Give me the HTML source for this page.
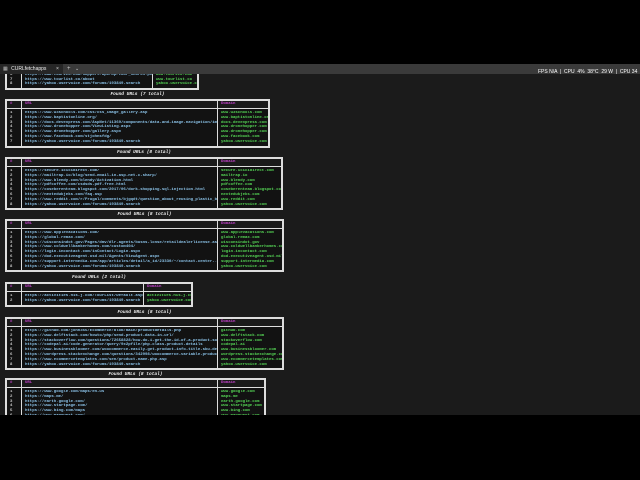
<!DOCTYPE html>
<html><head><meta charset="utf-8"><style>
html,body{margin:0;padding:0;background:#000;width:640px;height:480px;overflow:hidden;font-family:"Liberation Mono",monospace}
#term{position:absolute;left:0;top:64px;width:640px;height:351px;background:#1b1b1b;overflow:hidden}
#bar{position:absolute;left:0;top:64px;width:640px;height:10px;background:#3a3a3a;z-index:5}
#tab{position:absolute;left:0;top:0;width:63px;height:10px;background:#262626;color:#eee;font:5px "Liberation Sans",sans-serif;line-height:10px}
.t{position:absolute;left:5px;border:1px solid #ddd;background:#121212;box-sizing:border-box}
.t table{border-collapse:collapse;width:100%;table-layout:fixed;font-size:4px;font-weight:bold}
.t td{border:1.5px solid #ddd;padding:0 0 0 3px;vertical-align:top;line-height:4.8px}
.t td div{white-space:pre;overflow:hidden}
.hd td{height:7px;line-height:7px;color:#c040c8;background:#1a1a1a}
.bd td{padding-top:2px;padding-bottom:1px}
.n{color:#ccc}.u{color:#8cc4ea}.d{color:#55d655}
.ti{position:absolute;color:#eee;font-size:4.5px;font-weight:bold;font-style:italic;text-align:center;line-height:6px}
#ov{position:absolute;left:538px;top:69px;color:#fff;font:5px "Liberation Sans",sans-serif;z-index:6;white-space:pre}
</style></head><body>
<div id="term">
<div class="t" style="top:0px;width:194px"><table><col style="width:15px"><col style="width:131px"><col><tr class="bd"><td class="n"><div>5
6
7
8</div></td><td class="u"><div>https://www.tourmo.com/
https://www.tourzeo.com/support/api/mp/tour_search.php
https://www.tourlist.co/about
https://yahoo.uservoice.com/forums/193849-search</div></td><td class="d"><div>www.tourmo.com
www.tourzeo.com
www.tourlist.co
yahoo.uservoice.com</div></td></tr></table></div>
<div class="ti" style="left:5px;width:265px;top:28px">Found URLs (7 total)</div>
<div class="t" style="top:35px;width:265px"><table><col style="width:15px"><col style="width:196px"><col><tr class="hd"><td><div>#</div></td><td><div>URL</div></td><td><div>Domain</div></td></tr><tr class="bd"><td class="n"><div>1
2
3
4
5
6
7</div></td><td class="u"><div>https://www.w3schools.com/css/css_image_gallery.asp
https://www.baptistonline.org/
https://docs.devexpress.com/AspNet/11369/components/data-and-image-navigation/im...
https://www.dronehopper.com/ViewListing.aspx
https://www.dronehopper.com/gallery.aspx
https://www.facebook.com/stjohnsfdg/
https://yahoo.uservoice.com/forums/193849-search</div></td><td class="d"><div>www.w3schools.com
www.baptistonline.org
docs.devexpress.com
www.dronehopper.com
www.dronehopper.com
www.facebook.com
yahoo.uservoice.com</div></td></tr></table></div>
<div class="ti" style="left:5px;width:278px;top:86px">Found URLs (8 total)</div>
<div class="t" style="top:93px;width:278px"><table><col style="width:15px"><col style="width:196px"><col><tr class="hd"><td><div>#</div></td><td><div>URL</div></td><td><div>Domain</div></td></tr><tr class="bd"><td class="n"><div>1
2
3
4
5
6
7
8</div></td><td class="u"><div>https://secure.icicidirect.com/
https://mailtrap.io/blog/send-email-in-asp-net-c-sharp/
https://www.blendy.com/blendy/Activation.html
https://pdfcoffee.com/csdsds-pdf-free.html
https://coseberenteam.blogspot.com/2017/06/dork-shopping-sql-injection.html
https://nextedukjeks.com/faq.asp
https://www.reddit.com/r/Frugal/comments/bjgqdt/question_about_reusing_plastic_bo...
https://yahoo.uservoice.com/forums/193849-search</div></td><td class="d"><div>secure.icicidirect.com
mailtrap.io
www.blendy.com
pdfcoffee.com
coseberenteam.blogspot.com
nextedukjeks.com
www.reddit.com
yahoo.uservoice.com</div></td></tr></table></div>
<div class="ti" style="left:5px;width:279px;top:148px">Found URLs (8 total)</div>
<div class="t" style="top:155px;width:279px"><table><col style="width:15px"><col style="width:196px"><col><tr class="hd"><td><div>#</div></td><td><div>URL</div></td><td><div>Domain</div></td></tr><tr class="bd"><td class="n"><div>1
2
3
4
5
6
7
8</div></td><td class="u"><div>https://www.applevacations.com/
https://global.remax.com/
https://wisconsindot.gov/Pages/dmv/dlr-agents/busns-lcnse/retaildealerlicense.as...
https://www.coldwellbankerhomes.com/custom404/
https://login.incontact.com/inContact/Login.aspx
https://dod-executiveagent.osd.mil/Agents/ViewAgent.aspx
https://support.intermedia.com/app/articles/detail/a_id/23330/~/contact-center-...
https://yahoo.uservoice.com/forums/193849-search</div></td><td class="d"><div>www.applevacations.com
global.remax.com
wisconsindot.gov
www.coldwellbankerhomes.com
login.incontact.com
dod-executiveagent.osd.mil
support.intermedia.com
yahoo.uservoice.com</div></td></tr></table></div>
<div class="ti" style="left:5px;width:188px;top:211px">Found URLs (2 total)</div>
<div class="t" style="top:218px;width:188px"><table><col style="width:15px"><col style="width:122px"><col><tr class="hd"><td><div>#</div></td><td><div>URL</div></td><td><div>Domain</div></td></tr><tr class="bd"><td class="n"><div>1
2</div></td><td class="u"><div>https://activities.his-j.com/TourList/Default.aspx
https://yahoo.uservoice.com/forums/193849-search</div></td><td class="d"><div>activities.his-j.com
yahoo.uservoice.com</div></td></tr></table></div>
<div class="ti" style="left:5px;width:279px;top:246px">Found URLs (8 total)</div>
<div class="t" style="top:253px;width:279px"><table><col style="width:15px"><col style="width:196px"><col><tr class="hd"><td><div>#</div></td><td><div>URL</div></td><td><div>Domain</div></td></tr><tr class="bd"><td class="n"><div>1
2
3
4
5
6
7
8</div></td><td class="u"><div>https://github.com/john365/Ecommerce/blob/main/productdetails.php
https://www.delftstack.com/howto/php/send-product-data-in-url/
https://stackoverflow.com/questions/72658828/how-do-i-get-the-id-of-a-product-so...
https://codepal.ai/code-generator/query/9x2pf1le/php-class-product-details
https://www.businessbloomer.com/woocommerce-easily-get-product-info-title-sku-de...
https://wordpress.stackexchange.com/questions/342998/woocommerce-variable-produc...
https://www.ecommercetemplates.com/sen/product-name-php.asp
https://yahoo.uservoice.com/forums/193849-search</div></td><td class="d"><div>github.com
www.delftstack.com
stackoverflow.com
codepal.ai
www.businessbloomer.com
wordpress.stackexchange.com
www.ecommercetemplates.com
yahoo.uservoice.com</div></td></tr></table></div>
<div class="ti" style="left:5px;width:261px;top:308px">Found URLs (8 total)</div>
<div class="t" style="top:314px;width:261px"><table><col style="width:15px"><col style="width:196px"><col><tr class="hd"><td><div>#</div></td><td><div>URL</div></td><td><div>Domain</div></td></tr><tr class="bd"><td class="n"><div>1
2
3
4
5
6
7
8</div></td><td class="u"><div>https://www.google.com/maps/en-us
https://maps.me/
https://earth.google.com/
https://www.startpage.com/
https://www.bing.com/maps
https://www.mapquest.com/
https://www.openstreetmap.org/
https://yahoo.uservoice.com/forums/193849-search</div></td><td class="d"><div>www.google.com
maps.me
earth.google.com
www.startpage.com
www.bing.com
www.mapquest.com
www.openstreetmap.org
yahoo.uservoice.com</div></td></tr></table></div>
</div>
<div id="bar"><div id="tab"><span style="margin-left:3px;color:#bbb">&#9638;</span> <span style="margin-left:2px">CURLfetchapps</span><span style="position:absolute;left:56px;color:#ddd">×</span></div><span style="position:absolute;left:67px;top:0;color:#ccc;font:6px sans-serif;line-height:10px">+</span><span style="position:absolute;left:75px;top:0;color:#ccc;font:5px sans-serif;line-height:10px">⌄</span></div>
<div id="ov">FPS N/A  |  CPU  4%  38°C  29 W  |  CPU 34</div>
</body></html>
